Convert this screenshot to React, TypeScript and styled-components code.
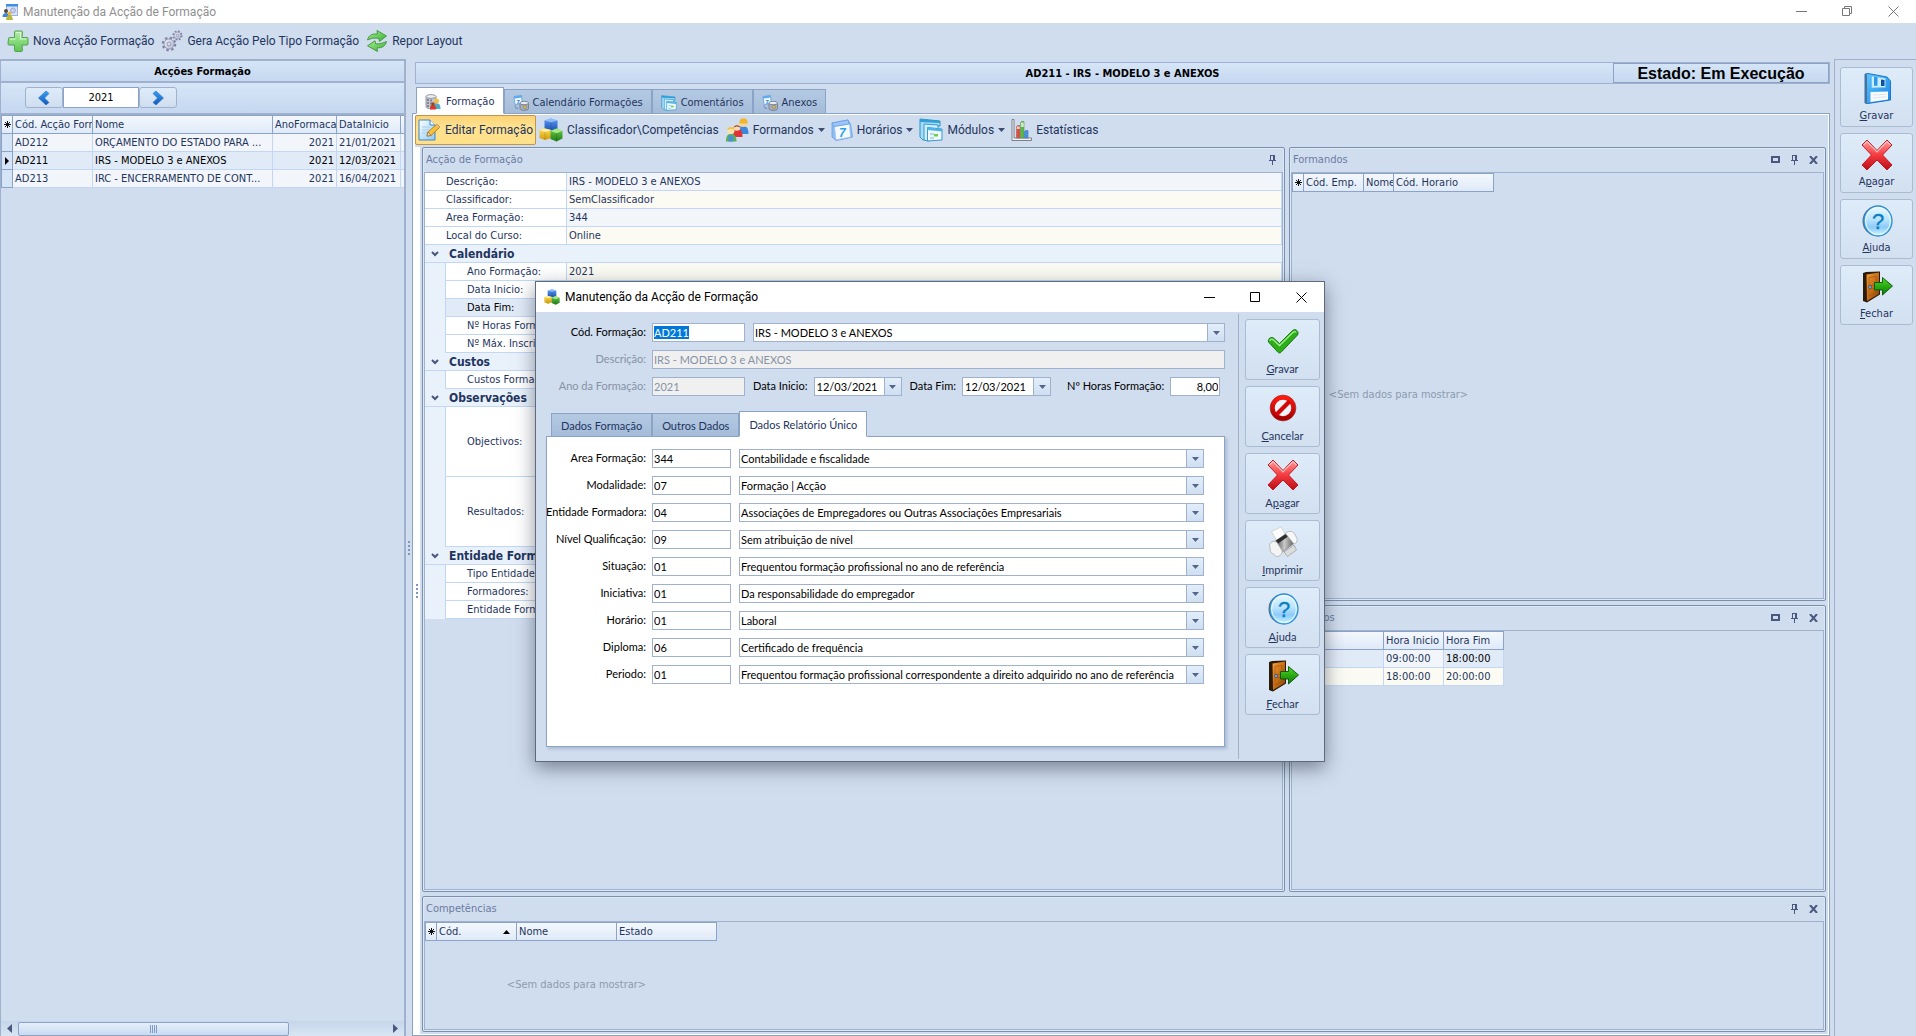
import React, { useEffect, useRef } from "react";
import styled, { createGlobalStyle, css } from "styled-components";

const ui = `Roboto, "Noto Sans", sans-serif`;
const grid = `"DejaVu Sans Condensed", "DejaVu Sans", sans-serif`;
const form = `Lato, "Liberation Sans", sans-serif`;
const heading = `"Liberation Sans", Arial, sans-serif`;

const c = {
  bg: "#d0ddee",
  ink: "#1f355e",
  line: "#8ba3c7",
  soft: "#9fb1cd",
  cell: "#c1d7f5",
  muted: "#6b7ba3",
};

const Global = createGlobalStyle`
  *, *::before, *::after { box-sizing: border-box; }
  body { margin: 0; background: ${c.bg}; color: ${c.ink}; font-family: ${grid}; font-size: 11px; line-height: 14px; }
  button, input, select { font: inherit; color: inherit; margin: 0; border-radius: 0; }
  button { padding: 0; border: 0; background: none; }
  table { border-collapse: separate; border-spacing: 0; }
  svg { display: block; flex: none; }
  ::selection { background: #0078d7; color: #fff; }
`;

/* ---------- icons ---------- */

const DefsSvg = styled.svg`
  position: absolute;
`;

const Gradients = () => (
  <DefsSvg width="0" height="0" aria-hidden="true">
    <defs>
      <linearGradient id="gGreen" x1="0" y1="0" x2="1" y2="1"><stop offset="0" stopColor="#a9eb95" /><stop offset="1" stopColor="#36b22d" /></linearGradient>
      <linearGradient id="gPlus" x1="0" y1="0" x2="0" y2="1"><stop offset="0" stopColor="#b4eea6" /><stop offset="1" stopColor="#5cc653" /></linearGradient>
      <linearGradient id="gRed" x1="0" y1="0" x2="0" y2="1"><stop offset="0" stopColor="#ff9c9c" /><stop offset=".5" stopColor="#f53b3f" /><stop offset="1" stopColor="#b80d15" /></linearGradient>
      <linearGradient id="gStop" x1="0" y1="0" x2="0" y2="1"><stop offset="0" stopColor="#ff1a10" /><stop offset="1" stopColor="#a80000" /></linearGradient>
      <linearGradient id="gHelp" x1="0" y1="0" x2="0" y2="1"><stop offset="0" stopColor="#e9f9ff" /><stop offset=".45" stopColor="#b9e4ff" /><stop offset=".7" stopColor="#8ccbfa" /><stop offset="1" stopColor="#cbf4ff" /></linearGradient>
      <linearGradient id="gDoor" x1="0" y1="0" x2="1" y2="1"><stop offset="0" stopColor="#f59b3b" /><stop offset=".5" stopColor="#c66f16" /><stop offset="1" stopColor="#7b3d06" /></linearGradient>
      <linearGradient id="gArrow" x1="0" y1="0" x2="0" y2="1"><stop offset="0" stopColor="#4ddb24" /><stop offset="1" stopColor="#0c7a04" /></linearGradient>
      <linearGradient id="gDisk" x1="0" y1="0" x2="1" y2="1"><stop offset="0" stopColor="#5cc6ff" /><stop offset="1" stopColor="#1c86e6" /></linearGradient>
      <linearGradient id="gPage" x1="0" y1="0" x2="1" y2="1"><stop offset="0" stopColor="#ffffff" /><stop offset="1" stopColor="#8cc9f5" /></linearGradient>
      <linearGradient id="gBlue" x1="0" y1="0" x2="0" y2="1"><stop offset="0" stopColor="#5d9af0" /><stop offset="1" stopColor="#1b51b5" /></linearGradient>
      <linearGradient id="gYellow" x1="0" y1="0" x2="0" y2="1"><stop offset="0" stopColor="#ffe05a" /><stop offset="1" stopColor="#d49a08" /></linearGradient>
      <linearGradient id="gLeaf" x1="0" y1="0" x2="0" y2="1"><stop offset="0" stopColor="#6ccb46" /><stop offset="1" stopColor="#1f7d19" /></linearGradient>
      <linearGradient id="gNav" x1="0" y1="0" x2="0" y2="1"><stop offset="0" stopColor="#37a0f5" /><stop offset="1" stopColor="#1156b8" /></linearGradient>
      <linearGradient id="gGear" x1="0" y1="0" x2="1" y2="1"><stop offset="0" stopColor="#eeeff8" /><stop offset="1" stopColor="#b9bad2" /></linearGradient>
      <linearGradient id="gMetal" x1="0" y1="0" x2="1" y2="0"><stop offset="0" stopColor="#3a3a3a" /><stop offset=".5" stopColor="#c9c9c9" /><stop offset="1" stopColor="#555" /></linearGradient>
    </defs>
  </DefsSvg>
);

type IconProps = { size?: number };

const PlusIcon = () => (
  <svg width="22" height="22" viewBox="0 0 22 22">
    <path d="M8.500 1h6a1 1 0 0 1 1 1l-.5 5.500h5a1 1 0 0 1 1 1V14a1 1 0 0 1-1 1h-5l.5 5.500a1 1 0 0 1-1 1h-6a1 1 0 0 1-1-1V15H2a1 1 0 0 1-1-1l.5-5.500a1 1 0 0 1 1-1h5V2a1 1 0 0 1 1-1z" fill="url(#gPlus)" stroke="#55a150" />
    <path d="M9 2.500h4.500V9h6M3 9h5.500" fill="none" stroke="#e2fbda" strokeWidth="1.200" opacity=".9" />
  </svg>
);

const GearsIcon = () => (
  <svg width="22" height="22" viewBox="0 0 22 22">
    <circle cx="8" cy="14" r="6.200" fill="none" stroke="#7f81a2" strokeWidth="2.200" strokeDasharray="2.400 2.470" />
    <circle cx="8" cy="14" r="5" fill="url(#gGear)" stroke="#8a8cab" strokeWidth=".8" />
    <circle cx="8" cy="14" r="2" fill="#d0ddee" stroke="#8a8cab" strokeWidth=".8" />
    <circle cx="16.500" cy="5.500" r="4.200" fill="none" stroke="#7f81a2" strokeWidth="1.800" strokeDasharray="1.700 1.600" />
    <circle cx="16.500" cy="5.500" r="3.400" fill="url(#gGear)" stroke="#8a8cab" strokeWidth=".7" />
    <circle cx="16.500" cy="5.500" r="1.300" fill="#d0ddee" stroke="#8a8cab" strokeWidth=".7" />
  </svg>
);

const RefreshIcon = () => (
  <svg width="22" height="22" viewBox="0 0 22 22" fill="url(#gGreen)" stroke="#3c9438" strokeWidth=".9" strokeLinejoin="round">
    <path d="M1.500 10C2.500 5.500 6 3.500 11.500 4l-.5-3.500 9.500 5.500-7 5.500-.8-3.200C8 7.800 5 8.300 1.500 10z" />
    <path d="M20.500 11.500c-1 4.500-4.500 6.700-9.500 6.300l.5 3.700-10-5.700 7.500-5 .8 3c4 .4 7-.6 10.700-2.300z" />
  </svg>
);

const NavArrow = ({ flip }: { flip?: boolean }) => (
  <svg width="14" height="16" viewBox="0 0 14 16">
    <path d={flip ? "M2 3.500L5 1l7.500 7L5 15l-3-2.500L6.500 8z" : "M12 3.500L9 1 1.500 8 9 15l3-2.500L7.500 8z"} fill="url(#gNav)" stroke="#2c6fc0" strokeWidth=".6" />
  </svg>
);

const AppIcon = () => (
  <svg width="16" height="16" viewBox="0 0 16 16">
    <rect x="4.500" y=".5" width="11" height="11" fill="#dfe6f7" stroke="#9fb0d8" />
    <rect x="4" y="0" width="12" height="2.500" fill="#3d8fe8" />
    <circle cx="11" cy="6.500" r="2.600" fill="#c5cdee" stroke="#8e99cc" strokeWidth=".7" />
    <circle cx="4" cy="7" r="2" fill="#5b4733" />
    <path d="M.5 13c0-3 1.500-4 3.500-4s3 1 3 4z" fill="#3a8ad8" />
    <circle cx="7.500" cy="9.500" r="1.800" fill="#f0b52d" />
    <path d="M4 16c.5-3.500 1.700-5 3.500-5s3 1.500 3.500 5z" fill="#b8b83c" />
  </svg>
);

const DatabaseUserIcon = () => (
  <svg width="16" height="16" viewBox="0 0 16 16">
    <path d="M1 2.500v10c0 3 10 3 10 0v-10z" fill="#c3c6cf" stroke="#7d8392" strokeWidth=".8" />
    <path d="M3 5v9M6 5.500v9" stroke="#555c6b" strokeWidth="1.200" strokeDasharray="2 1" />
    <ellipse cx="6" cy="2.500" rx="5" ry="1.900" fill="#eceef2" stroke="#7d8494" strokeWidth=".8" />
    <circle cx="11.500" cy="7" r="2.500" fill="#f4c13b" />
    <path d="M8.500 15c0-4.500 1.500-5.500 3.500-5.500s3.500 1 3.500 5.500z" fill="#4fa9d8" />
    <path d="M9.500 15.500c.5-3 2-3.500 3.500-3z" fill="#5bb04a" />
    <path d="M5 15.500c0-3.500 1.500-5 3-5s3 1.500 3 5z" fill="#e0342b" />
    <circle cx="8" cy="10" r="1.700" fill="#8d4a22" />
  </svg>
);

const CalendarDbIcon = () => (
  <svg width="16" height="16" viewBox="0 0 16 16">
    <path d="M1 1.500L8.500.5l.8 8L2 9.500z" fill="#eef7ff" stroke="#5f9fd8" strokeWidth=".8" />
    <path d="M1 1.500L8.500.5l.2 2L1.200 3.500z" fill="#58a9ee" />
    <text x="3.500" y="8.500" fontSize="6" fontWeight="700" fill="#2583d8" fontFamily="Liberation Sans">7</text>
    <path d="M7 8v5.500c0 2.500 8.500 2.500 8.500 0V8z" fill="#a9b0bd" stroke="#6d7687" strokeWidth=".8" />
    <ellipse cx="11.200" cy="8" rx="4.300" ry="1.700" fill="#e9edf3" stroke="#6d7687" strokeWidth=".8" />
    <path d="M2 10.500c0 2 1 3 3 3" fill="none" stroke="#5f86bb" />
    <circle cx="12" cy="12" r="1.800" fill="#d9b14a" stroke="#7b8494" strokeWidth=".6" />
  </svg>
);

const WindowsIcon = ({ size = 16 }: IconProps) => (
  <svg width={size} height={size} viewBox="0 0 24 24">
    <path d="M1 1l20 2v5H8v14H4L1 19z" fill="#a5dcf7" stroke="#2d93c4" />
    <path d="M1 1l20 2v2L1 4z" fill="#2ea0d6" />
    <path d="M5 6l14 1v14l-10 2-4-1z" fill="#cfefff" stroke="#3a98cf" />
    <path d="M8.500 9.500L23 11v11l-14.500 1z" fill="#eefaff" stroke="#3a98cf" />
    <path d="M8.500 9.500L23 11v2.500L8.500 12z" fill="#4fb3e8" />
    <path d="M11 15h4v2h-4zM11 19h4v2h-4z" fill="#a9d8f0" />
    <path d="M15 16h4v2.500h-4z" fill="#7cc84a" />
  </svg>
);

const EditIcon = () => (
  <svg width="23" height="22" viewBox="0 0 23 22">
    <path d="M1 1h11l5 5v15H1z" fill="url(#gPage)" stroke="#3f86c4" />
    <path d="M12 1v5h5" fill="#fff" stroke="#3f86c4" />
    <path d="M4 8h8M4 11h7M4 14h5" stroke="#a9cdea" />
    <path d="M9 17l1-4 9-8 3 3-9 8.500z" fill="#f9c137" stroke="#b27617" strokeWidth=".9" />
    <path d="M9 17l1-4 3 3.500z" fill="#f7e2bb" stroke="#8a6a33" strokeWidth=".7" />
    <path d="M17.500 6.300l3 3L22 8l-3-3z" fill="#e8b888" />
  </svg>
);

const CubesIcon = ({ size = 24 }: IconProps) => (
  <svg width={size} height={size} viewBox="0 0 24 24">
    <path d="M5.500 2.500L12 .5l6.500 2V11l-6.500 2-6.500-2z" fill="url(#gBlue)" />
    <path d="M5.500 2.500L12 .5l6.500 2-6.500 1.700z" fill="#8dbcf8" />
    <path d="M.5 12L6 10.500l6 1.500v8l-6 2-5.500-2z" fill="url(#gYellow)" />
    <path d="M.5 12L6 10.500l6 1.500-6 2z" fill="#fff0a0" />
    <path d="M11.500 13l6-2.500 6 2.500v7.500l-6 3-6-2.500z" fill="url(#gLeaf)" />
    <path d="M11.500 13l6-2.500 6 2.500-6 2.200z" fill="#a5e886" />
    <path d="M17.500 15.200v8.300M12 4.200V11M6 14v8" stroke="#00000022" />
  </svg>
);

const PeopleIcon = () => (
  <svg width="24" height="24" viewBox="0 0 24 24">
    <path d="M13.500 16c0-6.500 1.500-8 4.500-8s5.500 1.500 5.500 8z" fill="#3e86dd" />
    <circle cx="18.500" cy="5.500" r="3.600" fill="#f9d39a" />
    <path d="M14.500 4.500a4 4.200 0 0 1 8 0l.5 1h-9z" fill="#f3b62a" />
    <path d="M8 19c0-7 1.500-8 4.500-8s5 1 5 8z" fill="#df3238" />
    <circle cx="12" cy="9.500" r="3.300" fill="#fbd9b5" />
    <path d="M8.500 10a3.600 3.600 0 0 1 7 0c-2-2-5-2-7 0z" fill="#7c3b26" />
    <path d="M1 23.500c0-6 2-7.500 5-7.500s5.500 1.500 5.500 7.500z" fill="#5bb24f" />
    <path d="M3.500 17.500h5v6h-5z" fill="#4a90dc" />
    <circle cx="6" cy="12.500" r="3.600" fill="#fbe0ae" />
    <path d="M2.300 12a3.800 3.800 0 0 1 7.400 0c-2-1.300-5-1.300-7.400 0z" fill="#f0c43c" />
  </svg>
);

const CalendarIcon = () => (
  <svg width="22" height="22" viewBox="0 0 22 22">
    <path d="M1 4l16-3 2.500 4L21.500 18l-4 1L5 21.500 1 18z" fill="#8fbef6" stroke="#6b9ee0" strokeWidth=".8" />
    <path d="M3.500 7.500L18.500 5l1 13L5 20.800z" fill="#f4faff" stroke="#9cc3ef" strokeWidth=".7" />
    <path d="M1 4l16-3 1 4L2.800 7.500z" fill="#9cc6fb" stroke="#6b9ee0" strokeWidth=".8" />
    <text x="8" y="18" fontSize="12" fontStyle="italic" fontWeight="700" fill="#2ba2e6" fontFamily="Liberation Sans">7</text>
  </svg>
);

const ChartIcon = () => (
  <svg width="21" height="22" viewBox="0 0 21 22">
    <path d="M1 .5h2V19h17.500v2.500H1z" fill="#f1f1f3" stroke="#73777f" strokeWidth=".9" />
    <path d="M5.500 7.500l1-1h2.500V19H5.500z" fill="#e84b3c" stroke="#8d6a63" strokeWidth=".6" />
    <path d="M9.500 3.500l1-1H13V19H9.500z" fill="#59b848" stroke="#5c8d53" strokeWidth=".6" />
    <path d="M13.500 12.500l1-1H17V19h-3.500z" fill="#3f95e8" stroke="#4b719c" strokeWidth=".6" />
    <path d="M5.800 7.500h3v2.500h-3zM9.800 3.500h3v4.500h-3z" fill="#fff" opacity=".7" />
  </svg>
);

const DiskIcon = () => (
  <svg width="32" height="32" viewBox="0 0 32 32">
    <path d="M4 1l3-.5L26 4l3.500 4v19L7 30.500 4 30z" fill="url(#gDisk)" stroke="#1d78cc" />
    <path d="M4 1l2 .500v29L4 30z" fill="#4f6f94" />
    <path d="M10.500 3l14 2.300v9.200l-14 .500z" fill="#cdeeff" stroke="#5bb8f2" strokeWidth=".6" />
    <path d="M13 3.800l3.500.5v8.500H13z" fill="#2f97ea" />
    <path d="M20 6.500l3.500.5v6H20z" fill="#114f9c" />
    <path d="M9.500 19l17.500-.5v8L9.500 29z" fill="#f9fcff" />
    <path d="M12 22l13-.7M12 25l13-1.200" stroke="#dde4ec" />
  </svg>
);

const CrossIcon = () => (
  <svg width="32" height="32" viewBox="0 0 32 32">
    <path d="M6 1l10 10.500L26 1l5 5-9.500 10L31 26l-5 5-10-10L6 31l-5-5 9.500-10L1 6z" fill="url(#gRed)" stroke="#c11a22" strokeLinejoin="round" />
    <path d="M2.700 6L6 2.700l10 10.300L26 2.700 29.300 6" fill="none" stroke="#ffd2d2" strokeWidth="1.200" opacity=".8" />
  </svg>
);

const HelpIcon = () => (
  <svg width="32" height="32" viewBox="0 0 32 32">
    <ellipse cx="14.500" cy="16" rx="13" ry="14.500" fill="#5b6f86" />
    <ellipse cx="17" cy="16" rx="14" ry="15" fill="url(#gHelp)" stroke="#2f8fd0" strokeWidth="1.300" />
    <ellipse cx="17" cy="16" rx="12.400" ry="13.400" fill="none" stroke="#f3fcff" strokeWidth=".9" />
    <text x="17" y="24" textAnchor="middle" fontSize="22" fill="#0d7fc0" stroke="#0d7fc0" strokeWidth=".4" fontFamily="Liberation Sans">?</text>
  </svg>
);

const DoorIcon = () => (
  <svg width="32" height="32" viewBox="0 0 32 32">
    <path d="M2 2l3-1 14-.5v23L6 31.500 2 30z" fill="#2c1a08" />
    <path d="M5.500 3.500L18 1.500v21.500L6 30z" fill="url(#gDoor)" />
    <path d="M8 6.500l7-1V14l-7 .5zM8 18l7-1v4.500l-7 3.500z" fill="none" stroke="#a4560f" strokeWidth=".7" />
    <circle cx="9" cy="16" r="1.600" fill="#72a9e0" stroke="#2d4668" strokeWidth=".6" />
    <path d="M13.500 11.500h8V6.500L31.500 15l-10 9v-5h-8z" fill="url(#gArrow)" stroke="#0a5203" strokeWidth=".9" />
  </svg>
);

const CheckIcon = () => (
  <svg width="32" height="32" viewBox="0 0 32 32">
    <path d="M1.500 17c-1-3.500 3-6 5.500-3.500l5.500 5L25.500 5.500c3-2.500 7 1 5 4.500L14 27.300c-.8.800-2.200.8-3 0z" fill="#2fae1c" stroke="#157a0c" />
    <path d="M3 16c0-2 2-2.500 3.200-1.300l6.300 5.800L26 7.200c1-.8 2.300-.7 3.200.2" fill="none" stroke="#a0ef8a" strokeWidth="1.300" />
  </svg>
);

const StopIcon = () => (
  <svg width="32" height="32" viewBox="0 0 32 32">
    <circle cx="16" cy="16" r="10.500" fill="#eef4fb" stroke="url(#gStop)" strokeWidth="4.400" />
    <path d="M9.300 22.700L22.700 9.300" stroke="#d10a06" strokeWidth="4.200" />
    <circle cx="16" cy="16" r="12.900" fill="none" stroke="#8d0a06" strokeWidth=".6" />
  </svg>
);

const PrinterIcon = () => (
  <svg width="32" height="32" viewBox="0 0 32 32">
    <path d="M4.500 5.500L14 1l5.500 9-9 6z" fill="#fdfdfd" stroke="#c4c4c4" strokeWidth=".7" />
    <path d="M7 16L20 7l8 9.500-14 10.500z" fill="url(#gMetal)" stroke="#666" strokeWidth=".6" />
    <path d="M9 14.500L20.500 7l2 2.500L11 17.500z" fill="#2c2c2c" />
    <path d="M2.500 19c1-4 6-4.500 7.500-2.500l5 8c1 2.500-2 6.500-5.500 6L3.500 26z" fill="#f4f4f4" stroke="#a8a8a8" strokeWidth=".7" />
    <path d="M18.500 7.500c2.500-3 7-2.500 8.500-.5l3 5.500c.5 2.500-.5 5-3 5.500z" fill="#f7f7f7" stroke="#a8a8a8" strokeWidth=".7" />
    <path d="M17 26l10-7 2.500 5-9 6.500z" fill="#dcdcdc" stroke="#999" strokeWidth=".7" />
  </svg>
);

const PinGlyph = () => (
  <svg width="9" height="10" viewBox="0 0 9 10" fill="#4a5880"><path fillRule="evenodd" d="M2 0h5v5h1v1H5v4H4V6H1V5h1zM3 1v4h2V1z" /></svg>
);
const MaxGlyph = () => (
  <svg width="9" height="7" viewBox="0 0 9 7" fill="none" stroke="#4a5880" strokeWidth="2"><path d="M1 1h7v5H1z" /></svg>
);
const CloseGlyph = () => (
  <svg width="9" height="8" viewBox="0 0 9 8" stroke="#4a5880" strokeWidth="2"><path d="M1 0l7 8M8 0L1 8" /></svg>
);
const ExpandGlyph = () => (
  <svg width="8" height="6" viewBox="0 0 8 6" fill="none" stroke="#48577f" strokeWidth="2"><path d="M1 1l3 3 3-3" /></svg>
);
const CaretGlyph = ({ color = "#3d4c72" }: { color?: string }) => (
  <svg width="7" height="4" viewBox="0 0 7 4"><path d="M0 0h7L3.500 4z" fill={color} /></svg>
);
const StarGlyph = () => (
  <svg width="7" height="7" viewBox="0 0 7 7" stroke="#111" strokeWidth="1"><path d="M3.500 0v7M0 3.500h7M1 1l5 5M6 1L1 6" /></svg>
);

/* ---------- window chrome ---------- */

const Page = styled.div`
  display: flex;
  flex-direction: column;
  height: 100vh;
  overflow: hidden;
  background: ${c.bg};
`;

const TitleBar = styled.header<{ $dialog?: boolean }>`
  display: flex;
  align-items: center;
  flex: none;
  height: ${(p) => (p.$dialog ? 30 : 23)}px;
  padding-left: ${(p) => (p.$dialog ? 8 : 2)}px;
  gap: 5px;
  background: #fff;
  color: ${(p) => (p.$dialog ? "#000" : "#8f8f8f")};
  font: 12px/16px ${ui};
`;

const WindowTitle = styled.h1`
  flex: 1;
  margin: 0;
  font: inherit;
`;

const WindowControls = styled.div`
  display: flex;
`;

const WindowButton = styled.button`
  display: grid;
  place-items: center;
  width: 46px;
  height: 22px;
`;

const WindowButtons = ({ restore, color }: { restore?: boolean; color: string }) => (
  <WindowControls>
    <WindowButton aria-label="Minimizar">
      <svg width="11" height="11" stroke={color}><path d="M0 5.500h11" /></svg>
    </WindowButton>
    <WindowButton aria-label="Maximizar">
      <svg width="11" height="11" fill="none" stroke={color}>
        {restore ? <path d="M.5 2.500h7v7h-7zM2.500 2.500v-2h7v7h-2" /> : <path d="M.5.5h9v9h-9z" />}
      </svg>
    </WindowButton>
    <WindowButton aria-label="Fechar janela">
      <svg width="11" height="11" stroke={color}><path d="M.5.5l10 10M10.500.5l-10 10" /></svg>
    </WindowButton>
  </WindowControls>
);

const MainToolbar = styled.nav`
  display: flex;
  align-items: center;
  flex: none;
  height: 36px;
  gap: 1px;
  padding: 0 4px;
`;

const ToolButton = styled.button<{ $active?: boolean }>`
  display: flex;
  align-items: center;
  gap: 4px;
  height: 30px;
  padding: 0 2px;
  border: 1px solid transparent;
  border-radius: 2px;
  color: ${c.ink};
  font: 12px/16px ${ui};
  white-space: nowrap;
  ${(p) =>
    p.$active &&
    css`
      border-color: #c2954a;
      background: linear-gradient(#fbd277, #ffe390 40%, #ffe08a);
    `}
`;

const Workspace = styled.div`
  display: flex;
  flex: 1;
  min-height: 0;
`;

/* ---------- left list ---------- */

const ListPanel = styled.aside`
  display: flex;
  flex-direction: column;
  flex: none;
  width: 406px;
  border: solid ${c.soft};
  border-width: 2px 2px 0 1px;
`;

const ListTitle = styled.h2`
  flex: none;
  margin: 0;
  height: 22px;
  border-bottom: 2px solid ${c.soft};
  background: linear-gradient(#d6e5f7, #c5d8f0);
  color: #000;
  font: bold 11px/22px ${grid};
  text-align: center;
`;

const YearBar = styled.div`
  display: flex;
  flex: none;
  height: 32px;
  padding: 4px 24px;
  border-bottom: 2px solid ${c.soft};
  background: linear-gradient(#d6e5f7, #c5d8f0);
`;

const YearButton = styled.button`
  display: grid;
  place-items: center;
  width: 38px;
  height: 21px;
  border: 1px solid ${c.soft};
  border-radius: 3px;
  background: linear-gradient(#dfebf9, #cfdeef);
`;

const YearInput = styled.input`
  width: 76px;
  height: 21px;
  border: 1px solid ${c.line};
  background: #fff;
  color: #000;
  text-align: center;
`;

const ListArea = styled.div`
  flex: 1;
  min-height: 0;
  overflow: hidden;
`;

const ScrollBar = styled.div`
  display: flex;
  align-items: center;
  flex: none;
  height: 15px;
  padding: 0 6px;
  gap: 6px;
  background: linear-gradient(#c6d6ea, #d8e5f3);
`;

const ScrollThumb = styled.div`
  display: grid;
  place-items: center;
  width: 271px;
  height: 14px;
  border: 1px solid ${c.line};
  border-radius: 2px;
  background: linear-gradient(#e6effa, #c9daf0);
`;

const Grow = styled.span`
  flex: 1;
`;

/* ---------- data grids ---------- */

const DataTable = styled.table<{ $width: string }>`
  table-layout: fixed;
  width: ${(p) => p.$width};
`;

const Head = styled.th<{ $first?: boolean }>`
  height: 19px;
  padding: ${(p) => (p.$first ? "0 2px" : "0 0 0 2px")};
  overflow: hidden;
  border: solid ${c.line};
  border-width: 1px 1px 1px ${(p) => (p.$first ? 1 : 0)}px;
  background: linear-gradient(#f4f8fd, #dfeaf8);
  font-weight: normal;
  line-height: 17px;
  text-align: left;
  white-space: nowrap;
`;

const HeadLine = styled.span`
  display: flex;
  align-items: center;
  justify-content: space-between;
  padding-right: 6px;
`;

const Cell = styled.td<{ $tone?: "plain" | "current" | "cream" | "mark"; $right?: boolean; $strong?: boolean }>`
  height: 18px;
  padding: 0 2px;
  overflow: hidden;
  border: solid ${(p) => (p.$tone === "mark" ? c.line : c.cell)};
  border-width: 0 1px 1px ${(p) => (p.$tone === "mark" ? 1 : 0)}px;
  background: ${(p) => ({ plain: "#f2f5fa", current: "#e1ebf7", cream: "#fbfbf3", mark: "#d5e4f6" })[p.$tone ?? "plain"]};
  color: ${(p) => (p.$strong ? "#000" : c.ink)};
  line-height: 17px;
  text-align: ${(p) => (p.$right ? "right" : "left")};
  white-space: nowrap;
`;

const Empty = styled.p<{ $width: number }>`
  display: flex;
  align-items: center;
  justify-content: center;
  flex: 1;
  width: ${(p) => p.$width}px;
  margin: 0;
  padding-left: 11px;
  color: #8d9ab0;
`;

/* ---------- main area ---------- */

const Splitter = styled.div<{ $white?: boolean }>`
  display: grid;
  place-items: center;
  flex: none;
  width: 6px;
  background: ${(p) => (p.$white ? "#fff" : "transparent")};
`;

const Grip = () => (
  <svg width="2" height="14" fill="#7d97c0"><path d="M0 0h2v2H0zM0 4h2v2H0zM0 8h2v2H0zM0 12h2v2H0z" /></svg>
);

const Main = styled.main`
  display: flex;
  flex-direction: column;
  flex: 1;
  min-width: 0;
  padding-top: 3px;
`;

const Banner = styled.div`
  display: grid;
  grid-template-columns: 1fr auto 1fr;
  align-items: center;
  flex: none;
  height: 22px;
  margin: 0 0 3px 3px;
  border: 1px solid ${c.soft};
  background: linear-gradient(#d6e5f7, #c5d8f0);
  color: #000;
`;

const BannerTitle = styled.h2`
  grid-column: 2;
  margin: 0;
  padding-top: 2px;
  font: bold 11px/16px ${grid};
`;

const State = styled.strong`
  justify-self: end;
  width: 216px;
  height: 20px;
  border: 1px solid ${c.line};
  font: bold 16px/20px ${heading};
  text-align: center;
`;

const Tabs = styled.div<{ $inset: number }>`
  display: flex;
  align-items: flex-end;
  flex: none;
  margin-bottom: -1px;
  padding-left: ${(p) => p.$inset}px;
`;

const Tab = styled.button<{ $on?: boolean; $dialog?: boolean }>`
  position: relative;
  display: flex;
  align-items: center;
  gap: ${(p) => (p.$on ? 5 : 4)}px;
  height: ${(p) => (p.$dialog ? 24 : 25) + (p.$on ? 2 : 0)}px;
  padding: ${(p) => (p.$dialog ? "2px 9px 0" : "2px 8px 0")};
  border: 1px solid ${c.line};
  border-bottom-color: ${(p) => (p.$on ? "#fff" : c.line)};
  background: ${(p) => (p.$on ? "#fff" : "linear-gradient(#b4cae3, #a5bcd9)")};
  font-family: ${(p) => (p.$dialog ? form : grid)};
  color: ${c.ink};
  white-space: nowrap;
`;

const TabPage = styled.section`
  display: flex;
  flex-direction: column;
  flex: 1;
  min-height: 0;
  padding: 1px;
  border: 1px solid ${c.line};
  background: #fff;
`;

const PageToolbar = styled.nav`
  display: flex;
  align-items: flex-start;
  flex: none;
  height: 32px;
  margin-left: 1px;
  background: ${c.bg};
`;

const DockRow = styled.div`
  display: flex;
  flex: 1;
  min-height: 0;
`;

const Docks = styled.div`
  display: grid;
  grid-template: "form trainees" 454fr "form hours" 287fr "skills skills" 136px / 1fr 537px;
  gap: 4px;
  flex: 1;
  min-width: 0;
  min-height: 0;
  padding: 0 2px 2px;
  background: ${c.bg};
`;

const Dock = styled.section<{ $area: string }>`
  grid-area: ${(p) => p.$area};
  display: flex;
  flex-direction: column;
  min-width: 0;
  min-height: 0;
  padding: 1px;
  border: 1px solid #7c90ab;
  border-radius: 2px;
  box-shadow: inset 0 0 0 1px #dde8f6;
`;

const DockHeader = styled.header`
  display: flex;
  align-items: center;
  flex: none;
  height: 23px;
  gap: 10px;
  padding: 0 6px 2px 2px;
  color: ${c.muted};
`;

const DockTitle = styled.h3`
  flex: 1;
  margin: 0;
  font: inherit;
`;

const DockBody = styled.div`
  display: flex;
  flex-direction: column;
  flex: 1;
  min-height: 0;
  overflow: hidden;
  border: 1px solid ${c.soft};
`;

const PropertyTable = styled.table`
  table-layout: fixed;
  width: 100%;
`;

const GroupCell = styled.td`
  height: 18px;
  padding: 0;
  border-bottom: 1px solid ${c.cell};
  background: #e9f1fb;
`;

const GroupName = styled.th`
  padding: 0 0 0 3px;
  border-bottom: 1px solid ${c.cell};
  background: #e9f1fb;
  font: bold 12px/16px ${grid};
  text-align: left;
`;

const Gutter = styled.td`
  padding: 0;
  border-right: 1px solid ${c.cell};
  background: #e9f1fb;
`;

const GroupMark = styled.button`
  display: grid;
  place-items: center;
  width: 20px;
  height: 16px;
`;

const PropName = styled.th<{ $tall?: boolean; $inset: number; $current?: boolean }>`
  height: ${(p) => (p.$tall ? 70 : 18)}px;
  padding: 0 0 0 ${(p) => p.$inset}px;
  overflow: hidden;
  border: solid ${c.cell};
  border-width: 0 1px 1px 0;
  background: ${(p) => (p.$current ? "#e1ebf7" : "#fff")};
  color: ${(p) => (p.$current ? "#000" : c.ink)};
  font-weight: normal;
  line-height: 17px;
  text-align: left;
  white-space: nowrap;
`;

/* ---------- command buttons ---------- */

const Commands = styled.aside<{ $dialog?: boolean }>`
  display: flex;
  flex-direction: column;
  flex: none;
  width: ${(p) => (p.$dialog ? 86 : 82)}px;
  gap: 6px;
  margin-left: ${(p) => (p.$dialog ? 0 : 4)}px;
  padding: ${(p) => (p.$dialog ? "5px 4px 0 6px" : "7px 3px 0 5px")};
  border-left: 1px solid ${c.soft};
  ${(p) => !p.$dialog && `border-top: 1px solid ${c.soft};`}
`;

const CommandButton = styled.button<{ $dialog?: boolean }>`
  display: flex;
  flex-direction: column;
  align-items: center;
  justify-content: space-between;
  height: ${(p) => (p.$dialog ? 61 : 60)}px;
  padding: 5px 0 3px;
  border: 1px solid #aabbd4;
  border-radius: 3px;
  background: linear-gradient(#deebf9, #d3e0f0);
  color: ${c.ink};
  font-family: ${(p) => (p.$dialog ? form : grid)};
`;

const Command = ({ icon, label, at = 0, dialog }: { icon: React.ReactNode; label: string; at?: number; dialog?: boolean }) => (
  <CommandButton $dialog={dialog}>
    {icon}
    <span>{label.slice(0, at)}<u>{label[at]}</u>{label.slice(at + 1)}</span>
  </CommandButton>
);

/* ---------- dialog ---------- */

const Dialog = styled.section`
  position: absolute;
  top: 281px;
  left: 535px;
  display: flex;
  flex-direction: column;
  width: 790px;
  border: 1px solid #5f6b7c;
  background: ${c.bg};
  box-shadow: 0 6px 18px rgba(30, 40, 60, 0.5);
  color: #000;
  font: 11px/14px ${form};
`;

const DialogBody = styled.div`
  display: flex;
  padding: 2px 0 2px 10px;
`;

const DialogForm = styled.form`
  flex: 1;
  min-width: 0;
  margin-right: 13px;
  padding: 9px 0 12px;
`;

const FormRow = styled.div`
  display: flex;
  align-items: center;
  height: 19px;
  margin-bottom: 8px;
  gap: 8px;
`;

const Label = styled.label<{ $lead?: boolean; $off?: boolean }>`
  flex: none;
  width: ${(p) => (p.$lead ? "100px" : "auto")};
  margin-right: -2px;
  padding-bottom: 2px;
  color: ${(p) => (p.$off ? "#8792a4" : "#000")};
  text-align: right;
  white-space: nowrap;
`;

const Field = styled.input<{ $width?: number; $right?: boolean }>`
  flex: ${(p) => (p.$width ? "none" : "1")};
  width: ${(p) => (p.$width ? `${p.$width}px` : "auto")};
  min-width: 0;
  height: 19px;
  padding: 0 1px;
  border: 1px solid ${c.soft};
  outline: 0;
  background: #fff;
  text-align: ${(p) => (p.$right ? "right" : "left")};
  &:disabled { background: #f0f0f0; color: #8792a4; }
`;

const ComboBox = styled.span<{ $width?: number }>`
  display: grid;
  grid-template-columns: 1fr 18px;
  flex: ${(p) => (p.$width ? "none" : "1")};
  width: ${(p) => (p.$width ? `${p.$width}px` : "auto")};
  min-width: 0;
  height: 19px;
`;

const ComboSelect = styled.select`
  grid-area: 1 / 1 / 2 / 3;
  appearance: none;
  min-width: 0;
  height: 19px;
  padding: 0 1px;
  border: 1px solid ${c.soft};
  background: #fff;
`;

const ComboInput = styled.input`
  grid-area: 1 / 1 / 2 / 3;
  min-width: 0;
  height: 19px;
  padding: 0 2px;
  border: 1px solid ${c.soft};
  background: #fff;
`;

const ComboFace = styled.span`
  grid-area: 1 / 2 / 2 / 3;
  z-index: 1;
  display: grid;
  place-items: center;
  border: 1px solid ${c.soft};
  background: linear-gradient(#e3eefa, #cfdff1);
  pointer-events: none;
`;

const DialogPage = styled.div`
  height: 311px;
  padding: 12px 20px 0 0;
  border: 1px solid ${c.line};
  background: #fff;
  box-shadow: 2px 2px 3px rgba(90, 110, 150, 0.3);
`;

const ReportRows = styled.div`
  margin-left: -1px;
`;

const TabArea = styled.div`
  padding-top: 7px;
`;

/* ---------- data ---------- */

const actions = [
  ["AD212", "ORÇAMENTO DO ESTADO PARA ...", "2021", "21/01/2021"],
  ["AD211", "IRS - MODELO 3 e ANEXOS", "2021", "12/03/2021"],
  ["AD213", "IRC - ENCERRAMENTO DE CONT...", "2021", "16/04/2021"],
];

const general = [
  ["Descrição:", "IRS - MODELO 3 e ANEXOS"],
  ["Classificador:", "SemClassificador"],
  ["Area Formação:", "344"],
  ["Local do Curso:", "Online"],
];

type Prop = { name: string; value?: string; tall?: boolean; current?: boolean };
const groups: { title: string; rows: Prop[] }[] = [
  {
    title: "Calendário",
    rows: [
      { name: "Ano Formação:", value: "2021" },
      { name: "Data Inicio:" },
      { name: "Data Fim:", current: true },
      { name: "Nº Horas Formação:" },
      { name: "Nº Máx. Inscrições:" },
    ],
  },
  { title: "Custos", rows: [{ name: "Custos Formação:" }] },
  { title: "Observações", rows: [{ name: "Objectivos:", tall: true }, { name: "Resultados:", tall: true }] },
  { title: "Entidade Formadora", rows: [{ name: "Tipo Entidade:" }, { name: "Formadores:" }, { name: "Entidade Form." }] },
];

const report = [
  ["Area Formação:", "344", "Contabilidade e fiscalidade"],
  ["Modalidade:", "07", "Formação | Acção"],
  ["Entidade Formadora:", "04", "Associações de Empregadores ou Outras Associações Empresariais"],
  ["Nível Qualificação:", "09", "Sem atribuição de nível"],
  ["Situação:", "01", "Frequentou formação profissional no ano de referência"],
  ["Iniciativa:", "01", "Da responsabilidade do empregador"],
  ["Horário:", "01", "Laboral"],
  ["Diploma:", "06", "Certificado de frequência"],
  ["Periodo:", "01", "Frequentou formação profissional correspondente a direito adquirido no ano de referência"],
];

/* ---------- composition ---------- */

const Combo = ({ value, label }: { value: string; label: string }) => (
  <ComboBox>
    <ComboSelect aria-label={label} defaultValue={value}><option>{value}</option></ComboSelect>
    <ComboFace><CaretGlyph color="#56658c" /></ComboFace>
  </ComboBox>
);

const DateBox = ({ id, value, width }: { id: string; value: string; width: number }) => (
  <ComboBox $width={width}>
    <ComboInput id={id} defaultValue={value} />
    <ComboFace><CaretGlyph color="#56658c" /></ComboFace>
  </ComboBox>
);

const DockPanel = ({ area, title, tools, children }: { area: string; title: string; tools: React.ReactNode[]; children: React.ReactNode }) => (
  <Dock $area={area}>
    <DockHeader>
      <DockTitle>{title}</DockTitle>
      {tools.map((tool, i) => <button key={i} aria-label={`${title} ${i + 1}`}>{tool}</button>)}
    </DockHeader>
    <DockBody>{children}</DockBody>
  </Dock>
);

const ActionList = () => (
  <ListPanel>
    <ListTitle>Acções Formação</ListTitle>
    <YearBar>
      <YearButton aria-label="Ano anterior"><NavArrow /></YearButton>
      <YearInput aria-label="Ano" defaultValue="2021" />
      <YearButton aria-label="Ano seguinte"><NavArrow flip /></YearButton>
    </YearBar>
    <ListArea>
      <DataTable $width="478px">
        <colgroup><col width="12" /><col width="80" /><col width="180" /><col width="64" /><col width="64" /><col width="78" /></colgroup>
        <thead>
          <tr>
            <Head $first><StarGlyph /></Head>
            <Head>Cód. Acção Form</Head>
            <Head>Nome</Head>
            <Head>AnoFormaca</Head>
            <Head>DataInicio</Head>
            <Head />
          </tr>
        </thead>
        <tbody>
          {actions.map(([code, name, year, start], i) => {
            const on = i === 1;
            const tone = on ? "current" : "plain";
            return (
              <tr key={code}>
                <Cell $tone="mark">{on && <svg width="5" height="8"><path d="M1 0l4 4-4 4z" fill="#000" /></svg>}</Cell>
                <Cell $tone={tone} $strong={on}>{code}</Cell>
                <Cell $tone={tone} $strong={on}>{name}</Cell>
                <Cell $tone={tone} $strong={on} $right>{year}</Cell>
                <Cell $tone={tone} $strong={on}>{start}</Cell>
                <Cell $tone={tone} />
              </tr>
            );
          })}
        </tbody>
      </DataTable>
    </ListArea>
    <ScrollBar>
      <svg width="5" height="9"><path d="M5 0v9L0 4.500z" fill="#4a5880" /></svg>
      <ScrollThumb><svg width="8" height="8" stroke="#7d9ccb"><path d="M.5 0v8M2.500 0v8M4.500 0v8M6.500 0v8" /></svg></ScrollThumb>
      <Grow />
      <svg width="5" height="9"><path d="M0 0v9l5-4.500z" fill="#4a5880" /></svg>
    </ScrollBar>
  </ListPanel>
);

const Properties = () => (
  <PropertyTable>
    <colgroup><col width="21" /><col width="121" /><col /></colgroup>
    <tbody>
      {general.map(([name, value], i) => (
        <tr key={name}>
          <PropName colSpan={2} $inset={21}>{name}</PropName>
          <Cell $tone={i % 2 ? "cream" : "plain"}>{value}</Cell>
        </tr>
      ))}
    </tbody>
    {groups.map((group) => (
      <tbody key={group.title}>
        <tr>
          <GroupCell><GroupMark aria-label={`Recolher ${group.title}`}><ExpandGlyph /></GroupMark></GroupCell>
          <GroupName colSpan={2}>{group.title}</GroupName>
        </tr>
        {group.rows.map((row, i) => (
          <tr key={row.name}>
            <Gutter />
            <PropName $inset={21} $tall={row.tall} $current={row.current}>{row.name}</PropName>
            <Cell $tone={i % 2 ? "plain" : "cream"}>{row.value}</Cell>
          </tr>
        ))}
      </tbody>
    ))}
  </PropertyTable>
);

const MaintenanceDialog = () => {
  const code = useRef<HTMLInputElement>(null);
  useEffect(() => {
    code.current?.focus();
    code.current?.select();
  }, []);

  return (
    <Dialog role="dialog" aria-label="Manutenção da Acção de Formação">
      <TitleBar $dialog>
        <CubesIcon size={16} />
        <WindowTitle>Manutenção da Acção de Formação</WindowTitle>
        <WindowButtons color="#000" />
      </TitleBar>
      <DialogBody>
        <DialogForm>
          <FormRow>
            <Label $lead htmlFor="code">Cód. Formação:</Label>
            <Field id="code" ref={code} $width={93} defaultValue="AD211" />
            <Combo label="Formação" value="IRS - MODELO 3 e ANEXOS" />
          </FormRow>
          <FormRow>
            <Label $lead $off htmlFor="description">Descrição:</Label>
            <Field id="description" disabled defaultValue="IRS - MODELO 3 e ANEXOS" />
          </FormRow>
          <FormRow>
            <Label $lead $off htmlFor="year">Ano da Formação:</Label>
            <Field id="year" $width={93} disabled defaultValue="2021" />
            <Label htmlFor="start">Data Inicio:</Label>
            <DateBox id="start" value="12/03/2021" width={88} />
            <Label htmlFor="end">Data Fim:</Label>
            <DateBox id="end" value="12/03/2021" width={89} />
            <Grow />
            <Label htmlFor="hours">Nº Horas Formação:</Label>
            <Field id="hours" $width={50} $right defaultValue="8,00" />
            <span />
          </FormRow>
          <TabArea>
            <Tabs $inset={5} role="tablist">
              <Tab type="button" role="tab" $dialog>Dados Formação</Tab>
              <Tab type="button" role="tab" $dialog>Outros Dados</Tab>
              <Tab type="button" role="tab" $dialog $on aria-selected>Dados Relatório Único</Tab>
            </Tabs>
            <DialogPage>
              <ReportRows>
                {report.map(([label, value, text], i) => (
                  <FormRow key={label}>
                    <Label $lead htmlFor={`report-${i}`}>{label}</Label>
                    <Field id={`report-${i}`} $width={79} defaultValue={value} />
                    <Combo label={label} value={text} />
                  </FormRow>
                ))}
              </ReportRows>
            </DialogPage>
          </TabArea>
        </DialogForm>
        <Commands $dialog>
          <Command dialog icon={<CheckIcon />} label="Gravar" />
          <Command dialog icon={<StopIcon />} label="Cancelar" />
          <Command dialog icon={<CrossIcon />} label="Apagar" at={1} />
          <Command dialog icon={<PrinterIcon />} label="Imprimir" />
          <Command dialog icon={<HelpIcon />} label="Ajuda" />
          <Command dialog icon={<DoorIcon />} label="Fechar" />
        </Commands>
      </DialogBody>
    </Dialog>
  );
};

export default function App() {
  return (
    <Page>
      <Global />
      <Gradients />
      <TitleBar>
        <AppIcon />
        <WindowTitle>Manutenção da Acção de Formação</WindowTitle>
        <WindowButtons restore color="#777" />
      </TitleBar>
      <MainToolbar>
        <ToolButton><PlusIcon />Nova Acção Formação</ToolButton>
        <ToolButton><GearsIcon />Gera Acção Pelo Tipo Formação</ToolButton>
        <ToolButton><RefreshIcon />Repor Layout</ToolButton>
      </MainToolbar>
      <Workspace>
        <ActionList />
        <Splitter><Grip /></Splitter>
        <Main>
          <Banner>
            <BannerTitle>AD211 - IRS - MODELO 3 e ANEXOS</BannerTitle>
            <State>Estado: Em Execução</State>
          </Banner>
          <Tabs $inset={4} role="tablist">
            <Tab role="tab" $on aria-selected><DatabaseUserIcon />Formação</Tab>
            <Tab role="tab"><CalendarDbIcon />Calendário Formações</Tab>
            <Tab role="tab"><WindowsIcon />Comentários</Tab>
            <Tab role="tab"><CalendarDbIcon />Anexos</Tab>
          </Tabs>
          <TabPage>
            <PageToolbar>
              <ToolButton $active><EditIcon />Editar Formação</ToolButton>
              <ToolButton><CubesIcon />Classificador\Competências</ToolButton>
              <ToolButton><PeopleIcon />Formandos<CaretGlyph /></ToolButton>
              <ToolButton><CalendarIcon />Horários<CaretGlyph /></ToolButton>
              <ToolButton><WindowsIcon size={24} />Módulos<CaretGlyph /></ToolButton>
              <ToolButton><ChartIcon />Estatísticas</ToolButton>
            </PageToolbar>
            <DockRow>
              <Splitter $white><Grip /></Splitter>
              <Docks>
                <DockPanel area="form" title="Acção de Formação" tools={[<PinGlyph />]}>
                  <Properties />
                </DockPanel>
                <DockPanel area="trainees" title="Formandos" tools={[<MaxGlyph />, <PinGlyph />, <CloseGlyph />]}>
                  <DataTable $width="202px">
                    <colgroup><col width="12" /><col width="60" /><col width="30" /><col width="100" /></colgroup>
                    <thead><tr><Head $first><StarGlyph /></Head><Head>Cód. Emp.</Head><Head>Nome</Head><Head>Cód. Horario</Head></tr></thead>
                  </DataTable>
                  <Empty $width={202}>&lt;Sem dados para mostrar&gt;</Empty>
                </DockPanel>
                <DockPanel area="hours" title="Horários" tools={[<MaxGlyph />, <PinGlyph />, <CloseGlyph />]}>
                  <DataTable $width="212px">
                    <colgroup><col width="12" /><col width="80" /><col width="60" /><col width="60" /></colgroup>
                    <thead><tr><Head $first><StarGlyph /></Head><Head /><Head>Hora Inicio</Head><Head>Hora Fim</Head></tr></thead>
                    <tbody>
                      <tr><Cell $tone="mark" /><Cell $tone="current" /><Cell $tone="plain">09:00:00</Cell><Cell $tone="current" $strong>18:00:00</Cell></tr>
                      <tr><Cell $tone="mark" /><Cell $tone="cream" /><Cell $tone="cream">18:00:00</Cell><Cell $tone="cream">20:00:00</Cell></tr>
                    </tbody>
                  </DataTable>
                </DockPanel>
                <DockPanel area="skills" title="Competências" tools={[<PinGlyph />, <CloseGlyph />]}>
                  <DataTable $width="292px">
                    <colgroup><col width="12" /><col width="80" /><col width="100" /><col width="100" /></colgroup>
                    <thead>
                      <tr>
                        <Head $first><StarGlyph /></Head>
                        <Head><HeadLine>Cód.<svg width="7" height="4"><path d="M0 4h7L3.500 0z" fill="#000" /></svg></HeadLine></Head>
                        <Head>Nome</Head>
                        <Head>Estado</Head>
                      </tr>
                    </thead>
                  </DataTable>
                  <Empty $width={292}>&lt;Sem dados para mostrar&gt;</Empty>
                </DockPanel>
              </Docks>
            </DockRow>
          </TabPage>
        </Main>
        <Commands>
          <Command icon={<DiskIcon />} label="Gravar" />
          <Command icon={<CrossIcon />} label="Apagar" at={1} />
          <Command icon={<HelpIcon />} label="Ajuda" />
          <Command icon={<DoorIcon />} label="Fechar" />
        </Commands>
      </Workspace>
      <MaintenanceDialog />
    </Page>
  );
}
